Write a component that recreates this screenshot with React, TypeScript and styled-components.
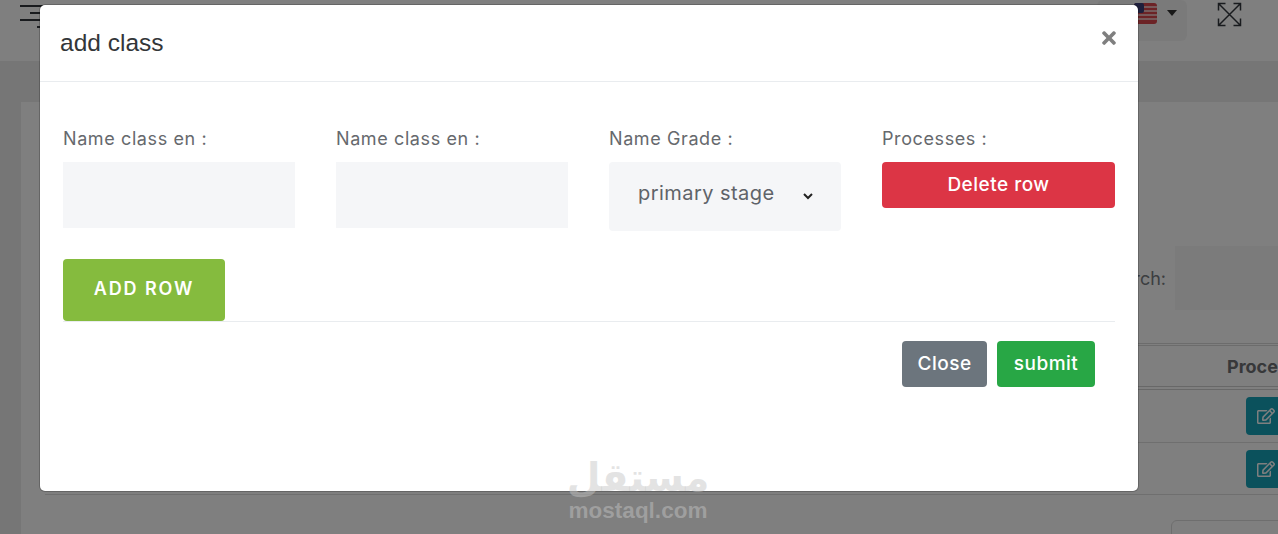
import React from 'react';
import styled, { createGlobalStyle } from 'styled-components';
import { FaRegEdit, FaTimes } from 'react-icons/fa';

const uiFont = `"Inter", "Open Sans", "Liberation Sans", sans-serif`;

const GlobalStyle = createGlobalStyle`
  html, body {
    margin: 0;
    padding: 0;
    background: #ececec;
  }
  * {
    box-sizing: border-box;
  }
`;

const Page = styled.div`
  position: relative;
  width: 1278px;
  height: 534px;
  overflow: hidden;
  background: #ececec;
  font-family: ${uiFont};
`;

const TopBar = styled.header`
  display: flex;
  align-items: flex-start;
  height: 61px;
  padding-left: 20px;
  background: #ffffff;
`;

const Burger = styled.div`
  display: flex;
  flex-direction: column;
  align-items: flex-end;
  gap: 5px;
  width: 24px;
  margin-top: 5px;
  span {
    height: 2px;
    background: #33373d;
  }
`;

const TopRight = styled.div`
  display: flex;
  align-items: flex-start;
  margin-left: auto;
`;

const LangBox = styled.div`
  display: flex;
  align-items: flex-start;
  gap: 10px;
  width: 90px;
  height: 41px;
  padding: 3px 0 0 37px;
  border-radius: 6px;
  background: #f5f5f5;
`;

const Caret = styled.i`
  width: 0;
  height: 0;
  margin-top: 7px;
  border-left: 5px solid transparent;
  border-right: 5px solid transparent;
  border-top: 6px solid #333;
`;

const ExpandIcon = styled.svg`
  width: 25px;
  height: 25px;
  margin: 2px 36px 0 30px;
`;

const Card = styled.section`
  margin: 41px -40px 0 21px;
  height: 480px;
  padding: 144px 20px 0 24px;
  background: #ffffff;
`;

const SearchRow = styled.div`
  display: flex;
  justify-content: flex-end;
  align-items: center;
  gap: 9px;
  height: 64px;
  color: #787c82;
  font-size: 18px;
`;

const SearchInput = styled.div`
  width: 123px;
  height: 64px;
  background: #f6f6f6;
`;

const Table = styled.div`
  margin-top: 33px;
`;

const HeadRow = styled.div`
  display: flex;
  justify-content: flex-end;
  align-items: center;
  height: 47px;
  border-top: 3px double #d8d8d8;
  border-bottom: 4px double #d0d0d0;
  color: #6f7175;
  font-size: 18px;
  font-weight: 700;
`;

const BodyRow = styled.div<{ $h: number }>`
  display: flex;
  justify-content: flex-end;
  align-items: center;
  height: ${(p) => p.$h}px;
  border-bottom: 1px solid #dedede;
`;

const HeadCell = styled.span`
  width: 71px;
  white-space: nowrap;
`;

const EditButton = styled.div`
  display: flex;
  align-items: center;
  padding-left: 11px;
  width: 52px;
  height: 38px;
  border-radius: 4px;
  background: #17a2b8;
  color: #ffffff;
  font-size: 18px;
`;

const PagerBox = styled.div`
  width: 127px;
  height: 40px;
  margin: 25px 0 0 auto;
  border: 1px solid #dcdcdc;
  border-radius: 6px;
  background: #ffffff;
`;

const Backdrop = styled.div`
  position: absolute;
  inset: 0;
  background: rgba(0, 0, 0, 0.5);
`;

const Modal = styled.div`
  position: absolute;
  left: 40px;
  top: 5px;
  width: 1098px;
  height: 486px;
  border-radius: 5px;
  background: #ffffff;
  box-shadow: 0 0 0 1px rgba(0, 0, 0, 0.2);
`;

const ModalHeader = styled.div`
  display: flex;
  justify-content: space-between;
  height: 77px;
  padding: 23px 19px 0 20px;
  border-bottom: 1px solid #e9ecef;
`;

const ModalTitle = styled.h5`
  margin: 0;
  color: #333639;
  font-family: "Liberation Sans", Arial, sans-serif;
  font-size: 24.5px;
  font-weight: 400;
  line-height: 30px;
`;

const CloseX = styled.span`
  display: flex;
  color: #7f7f7f;
  font-size: 20px;
`;

const ModalBody = styled.div`
  padding: 46px 23px 0;
`;

const FormRow = styled.div`
  display: grid;
  grid-template-columns: repeat(3, 232px) 233px;
  column-gap: 41px;
  align-items: start;
  height: 131px;
`;

const Field = styled.div`
  display: flex;
  flex-direction: column;
`;

const Label = styled.label`
  height: 34px;
  color: #66696d;
  font-size: 18px;
  letter-spacing: 0.6px;
  line-height: 22px;
`;

const TextBox = styled.div`
  height: 66px;
  background: #f5f6f8;
`;

const SelectBox = styled.div`
  display: flex;
  align-items: center;
  justify-content: space-between;
  height: 69px;
  padding: 0 28px 7px 29px;
  border-radius: 4px;
  background: #f5f6f8;
  color: #5f6369;
  font-size: 20px;
  letter-spacing: 0.45px;
`;

const Chevron = styled.svg`
  width: 10px;
  height: 7px;
  margin-top: 7px;
`;

const Button = styled.button<{ $bg: string; $w: number }>`
  width: ${(p) => p.$w}px;
  height: 46px;
  padding: 0 0 2px;
  border: 0;
  border-radius: 4px;
  background: ${(p) => p.$bg};
  color: #ffffff;
  font-family: ${uiFont};
  font-size: 19px;
  font-weight: 500;
  letter-spacing: 0.5px;
`;

const AddRow = styled.button`
  display: block;
  width: 162px;
  height: 62px;
  padding: 0 0 4px;
  border: 0;
  border-radius: 4px;
  background: #85bb3e;
  color: #ffffff;
  font-family: ${uiFont};
  font-size: 18px;
  font-weight: 600;
  letter-spacing: 1.9px;
`;

const Divider = styled.div`
  border-top: 1px solid #e9ecef;
`;

const Footer = styled.div`
  display: flex;
  justify-content: flex-end;
  gap: 10px;
  padding: 19px 20px 0 0;
`;

const Watermark = styled.div`
  position: absolute;
  left: 568px;
  top: 456px;
  width: 140px;
  display: flex;
  flex-direction: column;
  align-items: center;
  color: rgba(197, 197, 197, 0.47);
  pointer-events: none;
`;

const WatermarkArabic = styled.span`
  font-family: "DejaVu Sans", sans-serif;
  font-size: 39px;
  font-weight: 700;
  line-height: 44px;
`;

const WatermarkLatin = styled.span`
  font-family: "Liberation Sans", Arial, sans-serif;
  font-size: 22.5px;
  font-weight: 700;
  line-height: 22px;
`;

const fields = ['Name class en :', 'Name class en :'];

export default function App() {
  return (
    <Page>
      <GlobalStyle />
      <TopBar>
        <Burger>
          <span style={{ width: '100%' }} />
          <span style={{ width: '60%' }} />
          <span style={{ width: '100%' }} />
          <span style={{ width: '30%' }} />
        </Burger>
        <TopRight>
          <LangBox>
            <svg width="23" height="21" viewBox="0 0 23 21">
              <rect width="23" height="21" rx="3" fill="#d8474c" />
              <path d="M9 4h14M9 8h14M0 12h23M0 16h23" stroke="#f4d8d8" strokeWidth="1.4" />
              <rect width="10" height="10" rx="2" fill="#3c3f78" />
            </svg>
            <Caret />
          </LangBox>
          <ExpandIcon viewBox="0 0 25 25" fill="none" stroke="#33373d" strokeWidth="1.5">
            <path d="M1.5 1.5l22 22M23.5 1.5l-22 22M1.5 8.5v-7h7M16.5 1.5h7v7M1.5 16.5v7h7M23.5 16.5v7h-7" />
          </ExpandIcon>
        </TopRight>
      </TopBar>
      <Card>
        <SearchRow>
          <span>Search:</span>
          <SearchInput />
        </SearchRow>
        <Table>
          <HeadRow>
            <HeadCell>Processes</HeadCell>
          </HeadRow>
          <BodyRow $h={53}>
            <EditButton>
              <FaRegEdit />
            </EditButton>
          </BodyRow>
          <BodyRow $h={52}>
            <EditButton>
              <FaRegEdit />
            </EditButton>
          </BodyRow>
        </Table>
        <PagerBox />
      </Card>
      <Backdrop />
      <Modal>
        <ModalHeader>
          <ModalTitle>add class</ModalTitle>
          <CloseX>
            <FaTimes />
          </CloseX>
        </ModalHeader>
        <ModalBody>
          <FormRow>
            {fields.map((label, i) => (
              <Field key={i}>
                <Label>{label}</Label>
                <TextBox />
              </Field>
            ))}
            <Field>
              <Label>Name Grade :</Label>
              <SelectBox>
                primary stage
                <Chevron viewBox="0 0 10 7" fill="none" stroke="#222" strokeWidth="2">
                  <path d="M1 1l4 4 4-4" />
                </Chevron>
              </SelectBox>
            </Field>
            <Field>
              <Label>Processes :</Label>
              <Button $bg="#dc3545" $w={233}>
                Delete row
              </Button>
            </Field>
          </FormRow>
          <AddRow>ADD ROW</AddRow>
          <Divider />
          <Footer>
            <Button $bg="#6c757d" $w={85}>
              Close
            </Button>
            <Button $bg="#28a745" $w={98}>
              submit
            </Button>
          </Footer>
        </ModalBody>
      </Modal>
      <Watermark>
        <WatermarkArabic>مستقل</WatermarkArabic>
        <WatermarkLatin>mostaql.com</WatermarkLatin>
      </Watermark>
    </Page>
  );
}
